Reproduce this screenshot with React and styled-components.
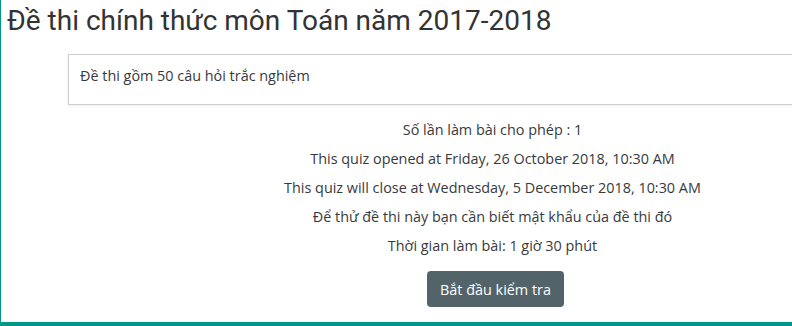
import React from 'react'
import styled, { createGlobalStyle } from 'styled-components'

const GlobalStyle = createGlobalStyle`
  html, body {
    margin: 0;
    padding: 0;
    background: #fff;
    overflow: hidden;
  }
  body {
    width: 792px;
    height: 326px;
  }
`

const Page = styled.div`
  width: 792px;
  height: 326px;
  box-sizing: border-box;
  border-left: 1px solid #009688;
  border-bottom: 4px solid #009688;
  overflow: hidden;
`

const Main = styled.div`
  width: 983px;
`

const Title = styled.h2`
  margin: 0;
  padding: 3px 0 0 6px;
  font-family: Roboto, "Liberation Sans", sans-serif;
  font-weight: 400;
  font-size: 28px;
  line-height: 36px;
  color: #333;
`

const Intro = styled.div`
  margin: 15px 67px 0;
  padding: 10px 11px 18px;
  border: 1px solid #cfcfcf;
  box-shadow: 0 1px 3px rgba(0, 0, 0, 0.08);
  font-family: "Open Sans", "Noto Sans", sans-serif;
  font-size: 14.4px;
  line-height: 21px;
  color: #373a3c;
`

const Info = styled.div`
  margin-top: 14px;
  text-align: center;
  font-family: "Open Sans", "Noto Sans", sans-serif;
  font-size: 14.4px;
  line-height: 21px;
  color: #373a3c;
`

const Line = styled.p`
  margin: 0 0 8px;
  &:nth-child(3), &:nth-child(5) {
    margin-top: 1px;
  }
`

const StartButton = styled.button`
  margin: 7px 0 0 6px;
  height: 36px;
  padding: 0 13px;
  border: none;
  border-radius: 4px;
  background: #526369;
  color: #fff;
  font-family: "Open Sans", "Noto Sans", sans-serif;
  font-size: 14.4px;
  cursor: pointer;
`

const lines = [
  'Số lần làm bài cho phép : 1',
  'This quiz opened at Friday, 26 October 2018, 10:30 AM',
  'This quiz will close at Wednesday, 5 December 2018, 10:30 AM',
  'Để thử đề thi này bạn cần biết mật khẩu của đề thi đó',
  'Thời gian làm bài: 1 giờ 30 phút',
]

const App = () => {
  return (
    <Page>
      <GlobalStyle />
      <Main>
        <Title>Đề thi chính thức môn Toán năm 2017-2018</Title>
        <Intro>Đề thi gồm 50 câu hỏi trắc nghiệm</Intro>
        <Info>
          {lines.map((l) => (
            <Line key={l}>{l}</Line>
          ))}
          <StartButton>Bắt đầu kiểm tra</StartButton>
        </Info>
      </Main>
    </Page>
  )
}

export default App
